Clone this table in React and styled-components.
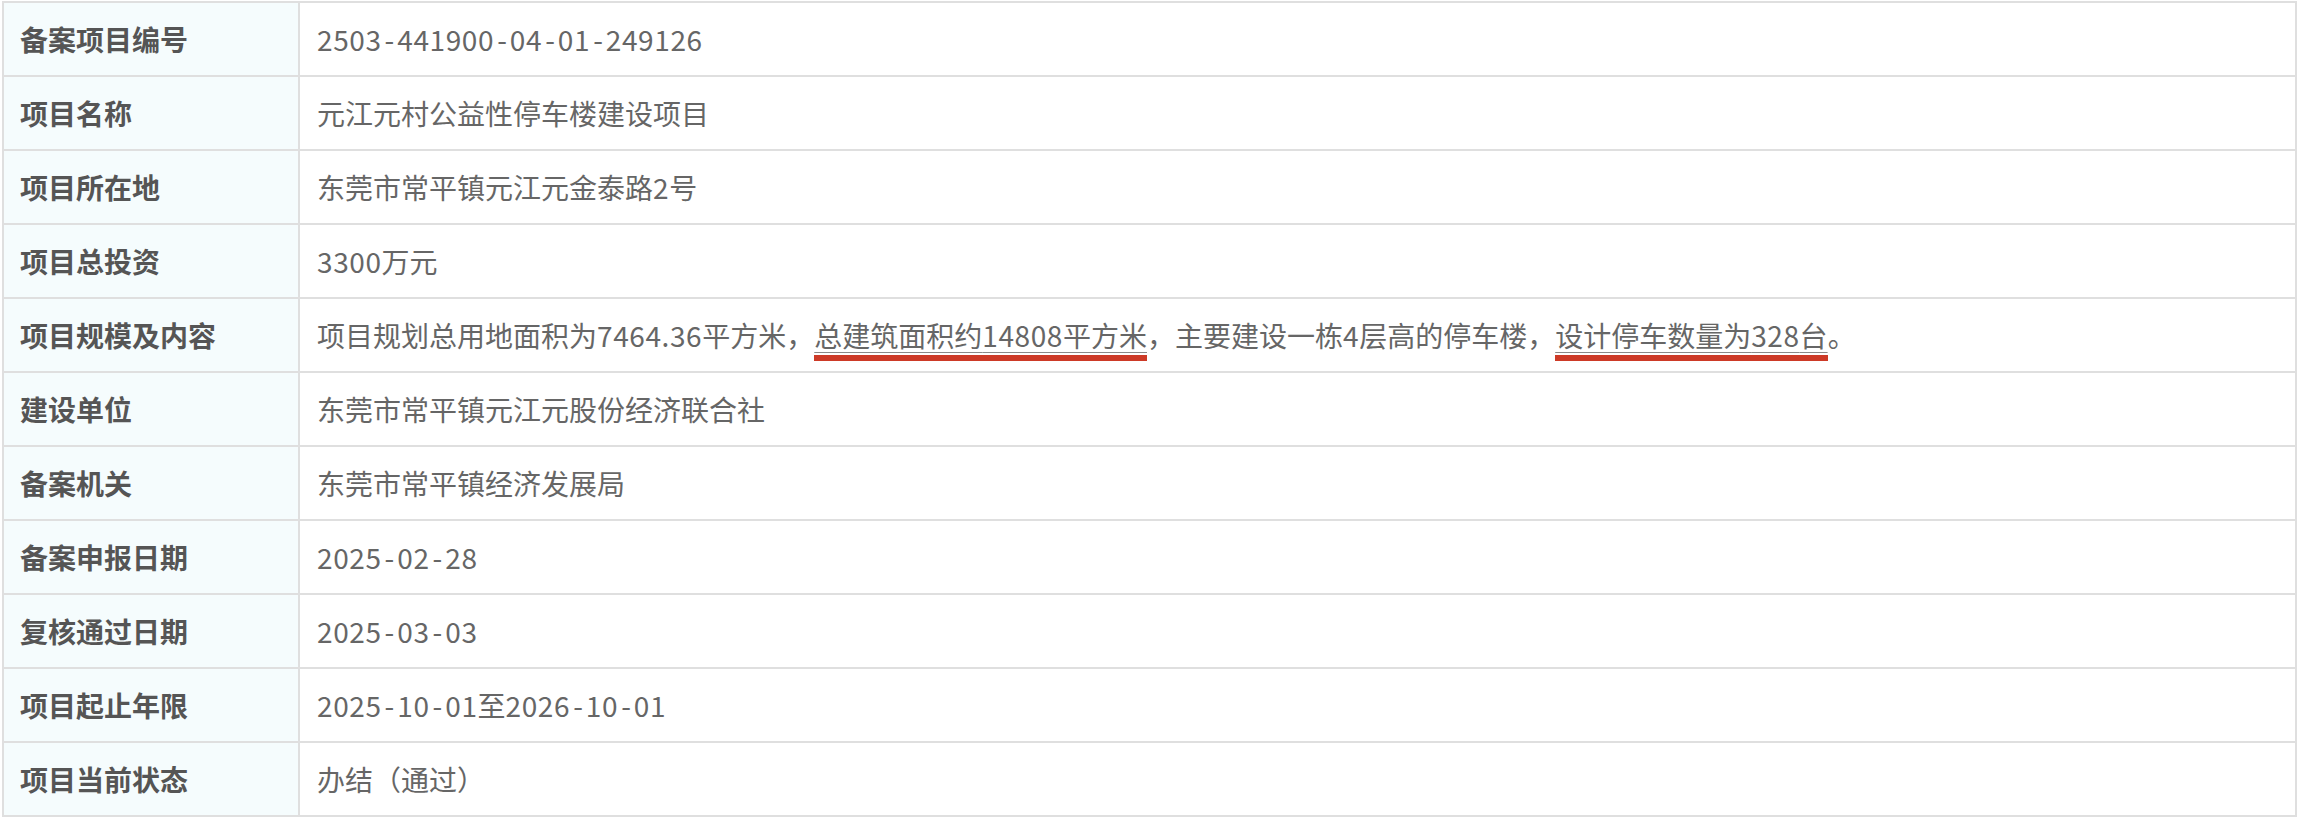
import React from "react";
import styled, { createGlobalStyle } from "styled-components";

const GlobalStyle = createGlobalStyle`
  html, body { margin: 0; padding: 0; background: #ffffff; }
  body {
    font-family: "Noto Sans CJK SC", "Noto Sans", "Liberation Sans", sans-serif;
    -webkit-font-smoothing: antialiased;
  }
`;

const Page = styled.div`
  padding: 1px 0 0 2px;
`;

const Table = styled.div`
  width: 2295px;
  box-sizing: border-box;
  display: grid;
  grid-template-columns: 294px 1fr;
  grid-auto-rows: 72px;
  gap: 2px;
  padding: 2px;
  background: #dfdfdf;
`;

const Label = styled.div`
  display: flex;
  align-items: center;
  padding-left: 16px;
  background: #f5fcfd;
  color: #555555;
  font-size: 28px;
  font-weight: 700;
  white-space: nowrap;
`;

const Value = styled.div`
  display: flex;
  align-items: center;
  padding-left: 17px;
  background: #ffffff;
  color: #666666;
  font-size: 28px;
  font-weight: 400;
  white-space: pre;
`;

const Num = styled.span`
  letter-spacing: 0.6px;
`;

const Dash = styled.span`
  padding: 0 3px;
`;

const Marked = styled.span`
  position: relative;
  text-decoration: underline;
  text-decoration-color: #8a8a8a;
  text-decoration-thickness: 1px;
  text-underline-offset: 5px;
  &::after {
    content: "";
    position: absolute;
    left: 0;
    right: 0;
    bottom: -6px;
    height: 6px;
    background: #cd3a27;
  }
`;

function fmt(text) {
  return text.split(/(\d[\d.]*|-)/).map((part, i) => {
    if (part === "-") return <Dash key={i}>-</Dash>;
    if (/^\d/.test(part)) return <Num key={i}>{part}</Num>;
    return part;
  });
}

const rows = [
  ["备案项目编号", fmt("2503-441900-04-01-249126")],
  ["项目名称", "元江元村公益性停车楼建设项目"],
  ["项目所在地", fmt("东莞市常平镇元江元金泰路2号")],
  ["项目总投资", fmt("3300万元")],
  [
    "项目规模及内容",
    <>
      {fmt("项目规划总用地面积为7464.36平方米，")}
      <Marked>{fmt("总建筑面积约14808平方米")}</Marked>
      {fmt("，主要建设一栋4层高的停车楼，")}
      <Marked>{fmt("设计停车数量为328台")}</Marked>。
    </>,
  ],
  ["建设单位", "东莞市常平镇元江元股份经济联合社"],
  ["备案机关", "东莞市常平镇经济发展局"],
  ["备案申报日期", fmt("2025-02-28")],
  ["复核通过日期", fmt("2025-03-03")],
  ["项目起止年限", fmt("2025-10-01至2026-10-01")],
  ["项目当前状态", "办结（通过）"],
];

export default function App() {
  return (
    <Page>
      <GlobalStyle />
      <Table>
        {rows.map(([label, value], i) => (
          <React.Fragment key={i}>
            <Label>{label}</Label>
            <Value>{value}</Value>
          </React.Fragment>
        ))}
      </Table>
    </Page>
  );
}
